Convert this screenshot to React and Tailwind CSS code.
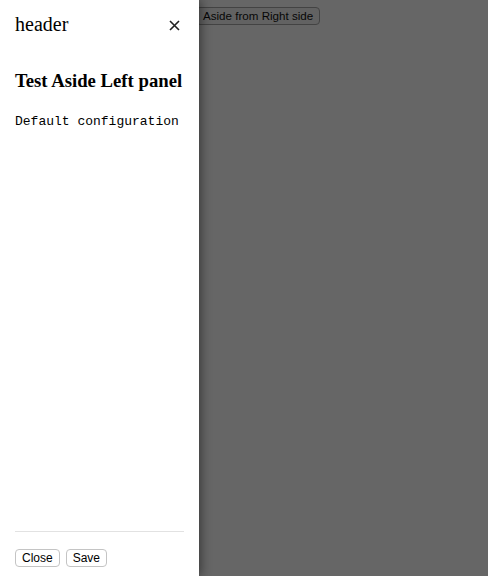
import React from "react";

export default function App() {
  return (
    <div className="relative h-[576px] w-[488px] overflow-hidden bg-white font-['Liberation_Sans',sans-serif]">
      {/* Page behind the drawer */}
      <div className="flex gap-1 pl-[196px] pt-[7px]">
        <button className="h-[18px] rounded-[4px] border border-[#a8a8a8] bg-[#f4f4f4] px-[6px] text-[11.6px] leading-[14px] text-[#111]">
          Aside from Right side
        </button>
      </div>

      {/* Backdrop */}
      <div className="absolute inset-0 bg-black/60" />

      {/* Left aside panel */}
      <aside className="absolute left-0 top-0 flex h-full w-[199px] flex-col bg-white px-[15px] shadow-[2px_0_10px_rgba(0,0,0,0.45)]">
        <div className="flex items-center justify-between pt-[13px]">
          <span className="font-['Liberation_Serif',serif] text-[20px] leading-[23px] text-black">
            header
          </span>
          <button className="mr-[4px] mt-[1px] flex h-[12px] w-[12px] items-center justify-center">
            <svg width="11" height="11" viewBox="0 0 11 11">
              <path d="M1 1 L10 10 M10 1 L1 10" stroke="#222" strokeWidth="1.6" />
            </svg>
          </button>
        </div>

        <div className="flex-1">
          <h3 className="mt-[34px] font-['Liberation_Serif',serif] text-[18.72px] font-bold leading-[22px] text-black">
            Test Aside Left panel
          </h3>
          <p className="mt-[22px] font-['Liberation_Mono',monospace] text-[13px] leading-[15px] text-black">
            Default configuration
          </p>
        </div>

        <div className="border-t border-[#e2e2e2] pb-[9px] pt-[17px]">
          <div className="flex gap-[6px]">
            <button className="h-[18px] rounded-[4px] border border-[#c4c4c4] bg-white px-[6px] text-[12px] leading-[14px] text-black">
              Close
            </button>
            <button className="h-[18px] rounded-[4px] border border-[#c4c4c4] bg-white px-[6px] text-[12px] leading-[14px] text-black">
              Save
            </button>
          </div>
        </div>
      </aside>
    </div>
  );
}
